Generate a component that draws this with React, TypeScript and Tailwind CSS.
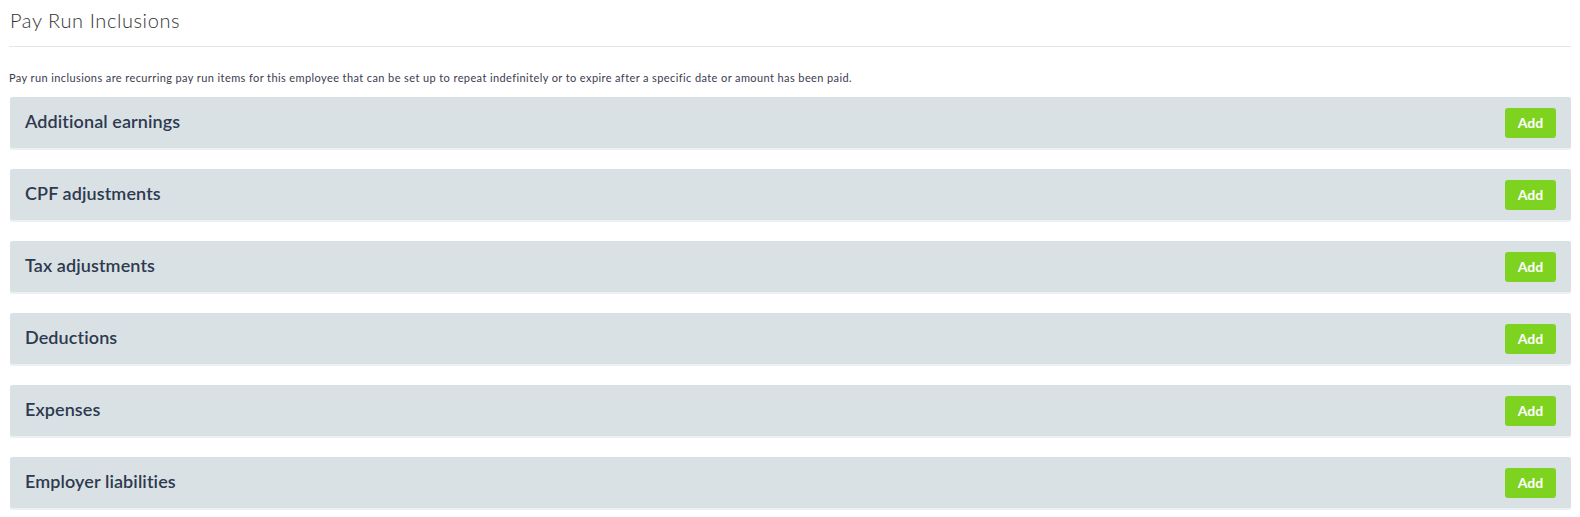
const sections = [
  'Additional earnings',
  'CPF adjustments',
  'Tax adjustments',
  'Deductions',
  'Expenses',
  'Employer liabilities',
];

export default function App() {
  return (
    <div className="min-h-[517px] bg-white pl-[9px] pr-[9px] pt-[8px] font-['Lato','Open_Sans',sans-serif]">
      <h1 className="pl-px text-[20px] font-light leading-[24px] tracking-[0.6px] text-[#333333]">Pay Run Inclusions</h1>
      <hr className="mt-[14px] border-0 border-t border-[#e3e6e8]" />

      <p className="mt-[24px] text-[11px] leading-[14px] tracking-[0.4px] text-[#3b3b4f]">
        Pay run inclusions are recurring pay run items for this employee that can be set up to repeat indefinitely or to expire after a specific date or amount has been paid.
      </p>

      <div className="mt-[12px] flex flex-col gap-[21px] pl-px">
        {sections.map(title => (
          <div
            key={title}
            className="flex h-[51px] items-center justify-between rounded-[2px] bg-[#dae1e5] px-[15px] shadow-[0_2px_0_#eef1f3]"
          >
            <h3 className="pb-[2px] text-[18px] font-semibold tracking-[0.1px] text-[#2d3a4f]">{title}</h3>
            <button className="h-[30px] w-[51px] rounded-[3px] bg-[#7ed321] text-[14px] font-bold text-white">
              Add
            </button>
          </div>
        ))}
      </div>
    </div>
  );
}
